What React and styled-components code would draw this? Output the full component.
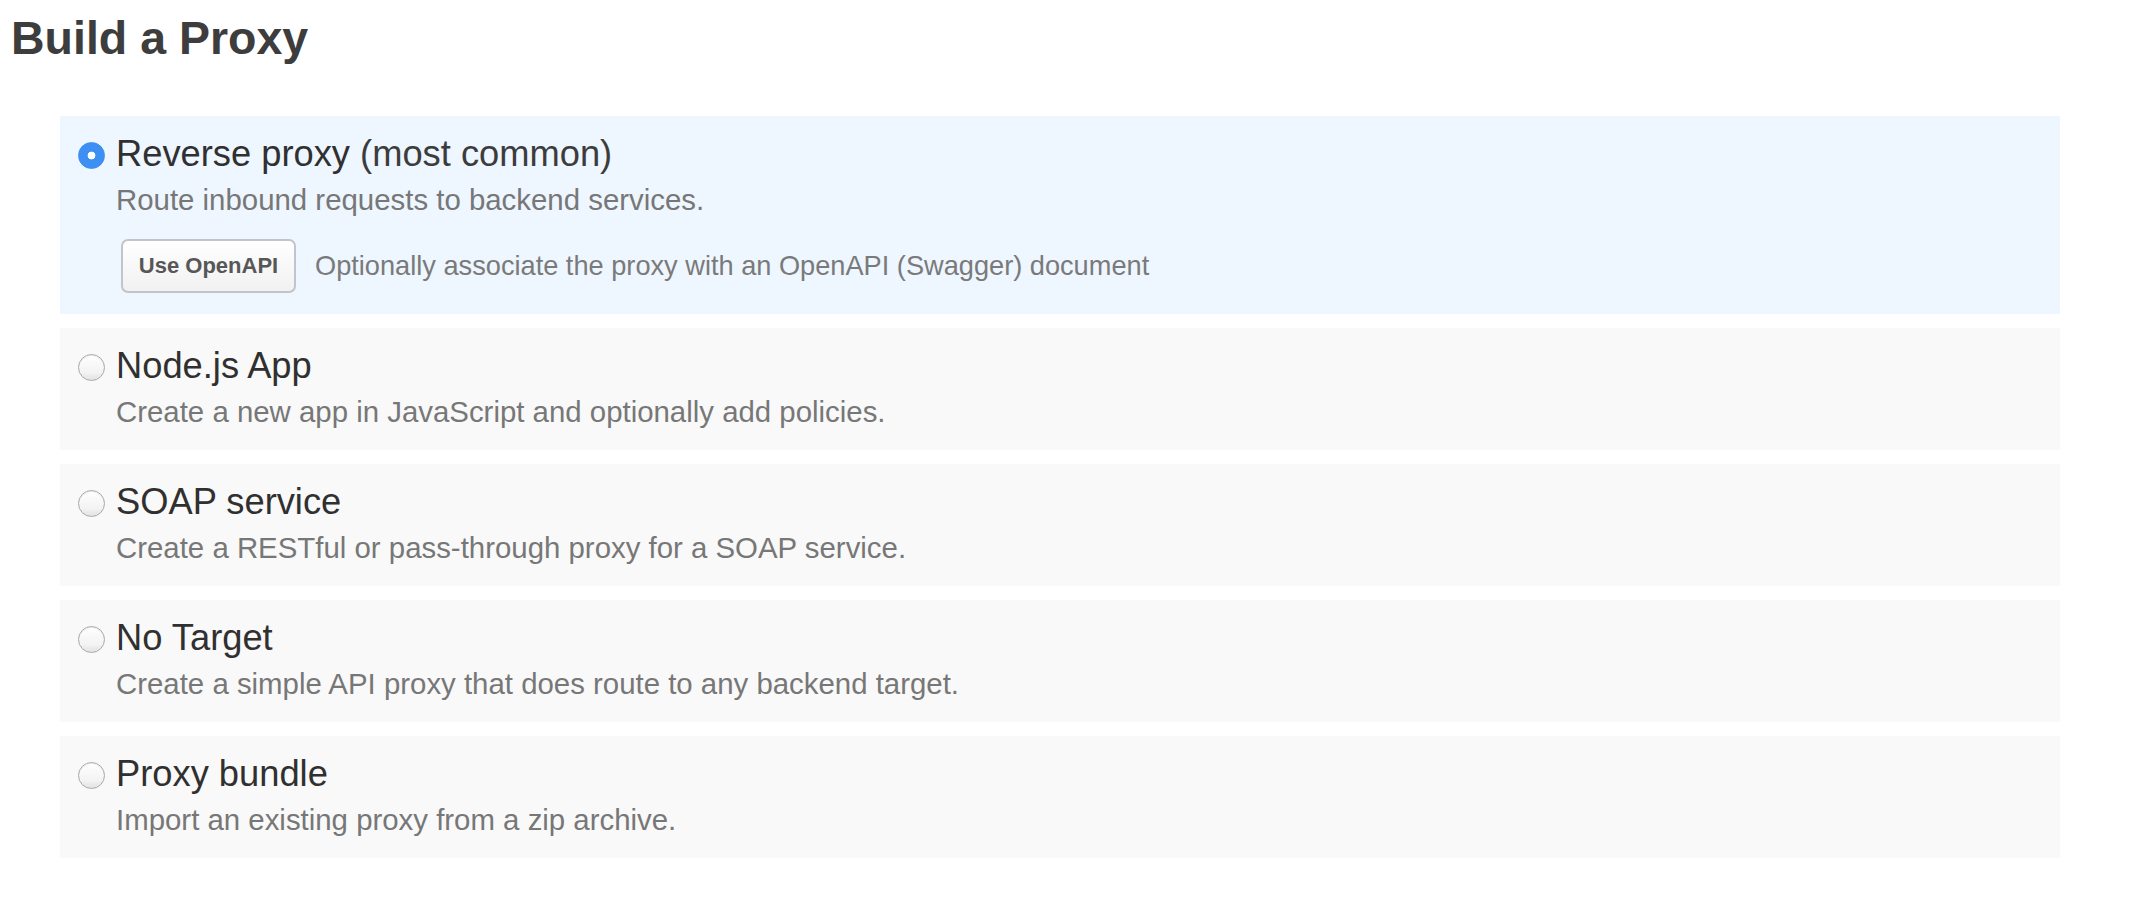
import React, { useState } from "react";
import styled, { createGlobalStyle } from "styled-components";

const GlobalStyle = createGlobalStyle`
    html, body {
        margin: 0;
        padding: 0;
        background: #fff;
    }
    body {
        font-family: "Liberation Sans", Arial, Helvetica, sans-serif;
        -webkit-font-smoothing: antialiased;
    }
`;

const OPTIONS = [
    {
        id: "reverse",
        title: "Reverse proxy",
        note: "(most common)",
        desc: "Route inbound requests to backend services.",
        openapi: true,
    },
    {
        id: "node",
        title: "Node.js App",
        desc: "Create a new app in JavaScript and optionally add policies.",
    },
    {
        id: "soap",
        title: "SOAP service",
        desc: "Create a RESTful or pass-through proxy for a SOAP service.",
    },
    {
        id: "notarget",
        title: "No Target",
        desc: "Create a simple API proxy that does route to any backend target.",
    },
    {
        id: "bundle",
        title: "Proxy bundle",
        desc: "Import an existing proxy from a zip archive.",
    },
];

const App = () => {
    const [selected, setSelected] = useState("reverse");

    return (
        <Page>
            <GlobalStyle />
            <Heading>Build a Proxy</Heading>
            <OptionList>
                {OPTIONS.map((opt) => {
                    const active = selected === opt.id;
                    return (
                        <Option
                            key={opt.id}
                            $active={active}
                            onClick={() => setSelected(opt.id)}
                        >
                            <TitleRow>
                                <Radio $checked={active} />
                                <Title>
                                    {opt.title}
                                    {opt.note && <Note> {opt.note}</Note>}
                                </Title>
                            </TitleRow>
                            <Desc>{opt.desc}</Desc>
                            {opt.openapi && (
                                <OpenApiRow>
                                    <Button type="button">Use OpenAPI</Button>
                                    <Hint>
                                        Optionally associate the proxy with an
                                        OpenAPI (Swagger) document
                                    </Hint>
                                </OpenApiRow>
                            )}
                        </Option>
                    );
                })}
            </OptionList>
        </Page>
    );
};

const Page = styled.div`
    padding: 12px 72px 40px 11px;
`;
const Heading = styled.h1`
    margin: 0 0 52px;
    font-size: 46.5px;
    line-height: 52px;
    font-weight: bold;
    color: #3d3d3d;
`;
const OptionList = styled.div`
    margin-left: 49px;
    display: flex;
    flex-direction: column;
    gap: 14px;
`;
const Option = styled.div`
    background: ${(p) => (p.$active ? "#eef6ff" : "#f9f9f9")};
    padding: 17px 18px 20px;
    cursor: pointer;
`;
const TitleRow = styled.div`
    display: flex;
    align-items: center;
    gap: 11px;
`;
const Radio = styled.span`
    width: 27px;
    height: 27px;
    flex-shrink: 0;
    box-sizing: border-box;
    border-radius: 50%;
    position: relative;
    top: 1px;
    border: 1px solid ${(p) => (p.$checked ? "#3a8cf0" : "#a9a9a9")};
    background: ${(p) =>
        p.$checked
            ? "radial-gradient(circle, #fff 0 3.6px, #3d8ff3 4.2px)"
            : "linear-gradient(#ffffff, #f3f3f3 70%, #e2e2e2)"};
    box-shadow: ${(p) =>
        p.$checked ? "none" : "inset 0 1px 1px rgba(0, 0, 0, 0.08)"};
`;
const Title = styled.div`
    font-size: 36.3px;
    line-height: 42px;
    color: #303030;
`;
const Note = styled.span`
    font-weight: 300;
    color: #3c3c3c;
`;
const Desc = styled.div`
    margin: 7px 0 0 38px;
    font-size: 29.4px;
    line-height: 36px;
    color: #777;
`;
const OpenApiRow = styled.div`
    margin: 21px 0 1px 43px;
    display: flex;
    align-items: center;
    gap: 19px;
`;
const Button = styled.button`
    width: 175px;
    height: 54px;
    box-sizing: border-box;
    border: 2px solid #c1c5c9;
    border-radius: 7px;
    background: linear-gradient(#ffffff, #f1f1f1);
    font-family: "Liberation Sans", Arial, sans-serif;
    font-size: 22px;
    font-weight: bold;
    color: #575757;
    padding: 0;
    cursor: pointer;
`;
const Hint = styled.span`
    font-size: 27.2px;
    line-height: 36px;
    color: #7a7a7a;
`;

export default App;
